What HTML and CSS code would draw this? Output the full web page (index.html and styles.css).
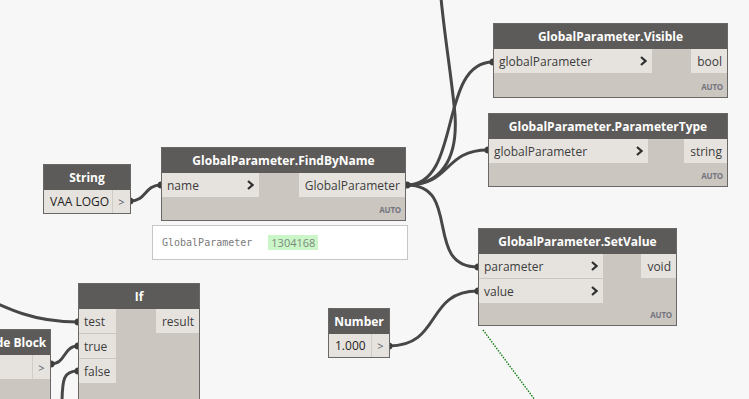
FILE: index.html
```html
<!DOCTYPE html>
<html>
<head>
<meta charset="utf-8">
<link rel="stylesheet" href="styles.css">
</head>
<body>
<div class="canvas">
  <svg class="wires" width="749" height="399" viewBox="0 0 749 399">
    <g class="w">
      <path d="M407,185 C440,185 458,160 455,115 C452,80 445,40 441,-2"/>
      <path d="M407,185 C462,185 438,62 493,62"/>
      <path d="M407,185 C452,185 443,150 488,150"/>
      <path d="M407,185 C462,185 423,267 478,267"/>
      <path d="M389,346 C442,346 425,291 478,291"/>
      <path d="M130,201 C147,201 144,185 161,185"/>
      <path d="M-40,286 C12,312 36,322 78,322"/>
      <path d="M51,364 C66,364 63,346 78,346"/>
      <path d="M62,405 C62,378 64,371 78,371"/>
    </g>
    <g class="nub">
      <circle cx="493" cy="62" r="3.5"/>
      <circle cx="488" cy="150" r="3.5"/>
      <circle cx="478" cy="267" r="3.5"/>
      <circle cx="478" cy="291" r="3.5"/>
      <circle cx="407" cy="185" r="3.5"/>
      <circle cx="389" cy="346" r="3.5"/>
      <circle cx="161" cy="185" r="3.5"/>
      <circle cx="130" cy="201" r="3.5"/>
      <circle cx="78" cy="322" r="3.5"/>
      <circle cx="78" cy="346" r="3.5"/>
      <circle cx="78" cy="371" r="3.5"/>
      <circle cx="51" cy="364" r="3.5"/>
    </g>
    <path class="green" d="M483,330 L535,400"/>
  </svg>

  <div class="node n-visible">
    <div class="hdr">GlobalParameter.Visible</div>
    <div class="body">
      <div class="ins">
        <div class="in w-vis"><span>globalParameter</span><svg class="chev" width="7" height="10" viewBox="0 0 7 10"><path d="M1,1 L5.5,5 L1,9"/></svg></div>
      </div>
      <div class="outs"><div class="out">bool</div></div>
    </div>
    <div class="foot">AUTO</div>
  </div>

  <div class="node n-ptype">
    <div class="hdr">GlobalParameter.ParameterType</div>
    <div class="body">
      <div class="ins">
        <div class="in w-pt"><span>globalParameter</span><svg class="chev" width="7" height="10" viewBox="0 0 7 10"><path d="M1,1 L5.5,5 L1,9"/></svg></div>
      </div>
      <div class="outs"><div class="out">string</div></div>
    </div>
    <div class="foot">AUTO</div>
  </div>

  <div class="node n-find">
    <div class="hdr">GlobalParameter.FindByName</div>
    <div class="body">
      <div class="ins">
        <div class="in w-find"><span>name</span><svg class="chev" width="7" height="10" viewBox="0 0 7 10"><path d="M1,1 L5.5,5 L1,9"/></svg></div>
      </div>
      <div class="outs"><div class="out">GlobalParameter</div></div>
    </div>
    <div class="foot">AUTO</div>
  </div>

  <div class="watch">
    <span class="wlabel">GlobalParameter</span>
    <span class="wval">1304168</span>
  </div>

  <div class="node n-set">
    <div class="hdr">GlobalParameter.SetValue</div>
    <div class="body">
      <div class="ins">
        <div class="in w-set"><span>parameter</span><svg class="chev" width="7" height="10" viewBox="0 0 7 10"><path d="M1,1 L5.5,5 L1,9"/></svg></div>
        <div class="in w-set"><span>value</span><svg class="chev" width="7" height="10" viewBox="0 0 7 10"><path d="M1,1 L5.5,5 L1,9"/></svg></div>
      </div>
      <div class="outs"><div class="out">void</div></div>
    </div>
    <div class="foot">AUTO</div>
  </div>

  <div class="node n-string">
    <div class="hdr">String</div>
    <div class="vrow"><span class="val">VAA LOGO</span><span class="arrow">&gt;</span></div>
  </div>

  <div class="node n-number">
    <div class="hdr">Number</div>
    <div class="vrow"><span class="val">1.000</span><span class="arrow">&gt;</span></div>
  </div>

  <div class="node n-code">
    <div class="hdr">Code Block</div>
    <div class="vrow"><span class="val"></span><span class="arrow">&gt;</span></div>
  </div>

  <div class="node n-if">
    <div class="hdr">If</div>
    <div class="body">
      <div class="ins">
        <div class="in w-if"><span>test</span></div>
        <div class="in w-if"><span>true</span></div>
        <div class="in w-if"><span>false</span></div>
      </div>
      <div class="outs"><div class="out">result</div></div>
    </div>
  </div>
</div>
</body>
</html>
```

FILE: styles.css
```css
* { box-sizing: border-box; }
html, body { margin: 0; padding: 0; }
body {
  background: #f7f7f7;
  font-family: "Open Sans", "Segoe UI", sans-serif;
  color: #3c3c3c;
}
.canvas {
  position: relative;
  width: 749px;
  height: 399px;
  overflow: hidden;
}
.wires { position: absolute; left: 0; top: 0; }
.w path { fill: none; stroke: #474747; stroke-width: 3; }
.nub circle { fill: #3e3e3e; }
.green { fill: none; stroke: #0a7a0a; stroke-width: 1.4; stroke-dasharray: 1.4 1.4; }

.node {
  position: absolute;
  border: 1px solid #6a6866;
  background: #cbc7c0;
  display: flex;
  flex-direction: column;
}
.hdr {
  background: #5d5b59;
  color: #ffffff;
  font-weight: 700;
  font-size: 12px;
  height: 25px;
  flex: none;
  display: flex;
  align-items: center;
  justify-content: center;
  white-space: nowrap;
}
.body { display: flex; justify-content: space-between; align-items: flex-start; }
.ins, .outs { display: flex; flex-direction: column; gap: 1px; }
.in {
  height: 24px;
  background: #e6e3df;
  display: flex;
  align-items: center;
  justify-content: space-between;
  padding: 0 5px 0 5px;
  font-size: 12px;
  color: #3c3c3c;
  white-space: nowrap;
}
.chev path { fill: none; stroke: #2f2f2f; stroke-width: 2.2; }
.out {
  height: 24px;
  background: #e6e3df;
  padding: 0 5px 0 6px;
  display: flex;
  align-items: center;
  font-size: 12px;
  color: #3c3c3c;
  white-space: nowrap;
}
.foot {
  flex: 1;
  display: flex;
  justify-content: flex-end;
  align-items: flex-end;
  padding: 0 4px 5px;
  font-size: 8px;
  font-weight: 700;
  color: #74747f;
  letter-spacing: -0.2px;
}

.n-visible { left: 493px; top: 23px; width: 235px; height: 75px; }
.w-vis { width: 158px; }
.n-ptype { left: 488px; top: 113px; width: 240px; height: 74px; }
.w-pt { width: 159px; }
.n-find { left: 161px; top: 147px; width: 245px; height: 74px; }
.w-find { width: 97px; }
.n-set { left: 478px; top: 228px; width: 199px; height: 98px; }
.w-set { width: 124px; }
.n-if { left: 78px; top: 283px; width: 122px; height: 140px; }
.w-if { width: 37px; }

.vrow {
  display: flex;
  height: 24px;
  background: #e6e3df;
  font-size: 12px;
}
.vrow .val {
  flex: 1;
  display: flex;
  align-items: center;
  padding-left: 6px;
  color: #222;
  white-space: nowrap;
}
.vrow .arrow {
  width: 18px;
  display: flex;
  align-items: center;
  justify-content: center;
  border-left: 1px solid #d0ccc6;
  color: #555a66;
  font-size: 11px;
}
.n-string { left: 43px; top: 164px; width: 88px; height: 50px; }
.n-number { left: 328px; top: 308px; width: 62px; height: 50px; }
.n-code { left: -24px; top: 329px; width: 75px; height: 100px; }

.watch {
  position: absolute;
  left: 152px;
  top: 225px;
  width: 256px;
  height: 35px;
  background: #ffffff;
  border: 1px solid #c6c6c6;
  display: flex;
  align-items: center;
  padding-left: 9px;
  font-family: "DejaVu Sans Mono", monospace;
  font-size: 10px;
  color: #7a7a7a;
}
.wval {
  margin-left: 16px;
  background: #caf6c8;
  padding: 2px 3px;
  color: #7d8a7d;
  font-family: "Open Sans", sans-serif;
  font-size: 11px;
  line-height: 11px;
}
```
